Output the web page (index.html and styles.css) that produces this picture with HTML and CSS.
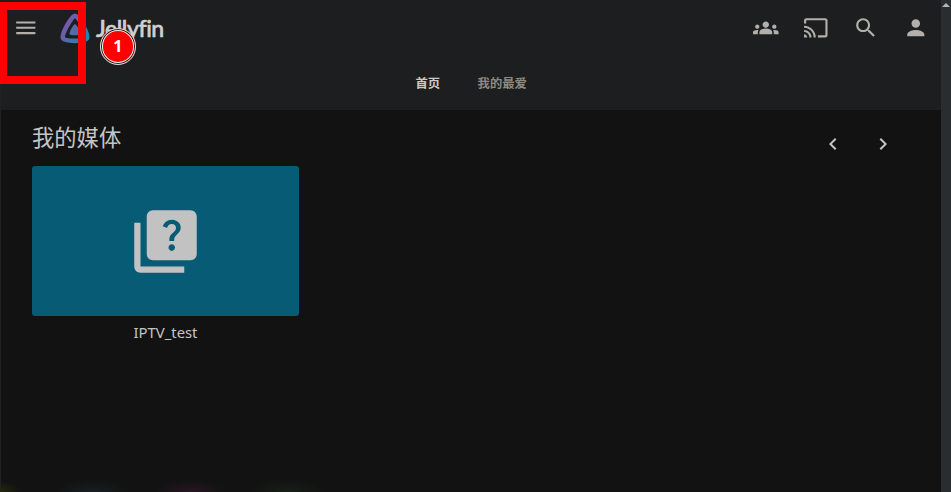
FILE: index.html
```html
<!DOCTYPE html>
<html lang="zh-CN">
<head>
<meta charset="utf-8">
<title>Jellyfin</title>
<link rel="stylesheet" href="styles.css">
</head>
<body>
<div class="app">
  <div class="page">
    <header class="header">
      <div class="topbar">
        <svg class="icon menu" viewBox="0 0 24 24"><path d="M3 18h18v-2H3v2zm0-5h18v-2H3v2zm0-7v2h18V6H3z"/></svg>
        <div class="brand">
          <svg class="mark" viewBox="0 0 32 32">
            <defs><linearGradient id="g" x1="5" y1="10" x2="29" y2="25" gradientUnits="userSpaceOnUse"><stop offset="0" stop-color="#8053a5"/><stop offset="1" stop-color="#168bb8"/></linearGradient></defs>
            <path d="M16 3.700C12.500 3.700 2.200 22.800 4 26.300c1.800 3.400 22.300 3.400 24 0C29.700 22.800 19.500 3.700 16 3.700Z" fill="none" stroke="url(#g)" stroke-width="4.600"/>
            <path d="M16 12.300c-1.600 0-6.100 8.300-5.400 9.900.8 1.500 10 1.500 10.800 0C22.200 20.600 17.600 12.300 16 12.300Z" fill="url(#g)"/>
          </svg>
          <span class="brand-name">Jellyfin</span>
        </div>
        <nav class="actions">
          <svg class="icon" viewBox="0 0 24 24"><path d="M12 12.750c1.630 0 3.070.390 4.240.9 1.080.480 1.760 1.560 1.760 2.730V18H6v-1.610c0-1.180.680-2.260 1.760-2.730 1.170-.520 2.610-.910 4.240-.910zM4 13c1.100 0 2-.9 2-2s-.9-2-2-2-2 .9-2 2 .9 2 2 2zm1.130 1.100C4.760 14.040 4.390 14 4 14c-.990 0-1.930.210-2.780.580C.480 14.900 0 15.620 0 16.430V18h4.500v-1.610c0-.830.230-1.610.630-2.290zM20 13c1.100 0 2-.9 2-2s-.9-2-2-2-2 .9-2 2 .9 2 2 2zm4 3.430c0-.810-.480-1.530-1.220-1.850C21.930 14.210 20.990 14 20 14c-.390 0-.760.040-1.130.100.4.680.630 1.460.630 2.290V18H24v-1.570zM12 6c1.660 0 3 1.340 3 3s-1.340 3-3 3-3-1.340-3-3 1.340-3 3-3z"/></svg>
          <svg class="icon" viewBox="0 0 24 24"><path d="M21 3H3c-1.100 0-2 .9-2 2v3h2V5h18v14h-7v2h7c1.100 0 2-.9 2-2V5c0-1.100-.9-2-2-2zM1 18v3h3c0-1.660-1.340-3-3-3zm0-4v2c2.760 0 5 2.240 5 5h2c0-3.870-3.130-7-7-7zm0-4v2c4.970 0 9 4.030 9 9h2c0-6.080-4.930-11-11-11z"/></svg>
          <svg class="icon" viewBox="0 0 24 24"><path d="M15.500 14h-.790l-.280-.270C15.410 12.590 16 11.110 16 9.500 16 5.910 13.090 3 9.500 3S3 5.910 3 9.500 5.910 16 9.500 16c1.610 0 3.090-.590 4.230-1.570l.270.280v.790l5 4.990L20.490 19l-4.990-5zm-6 0C7.010 14 5 11.990 5 9.500S7.010 5 9.500 5 14 7.010 14 9.500 11.990 14 9.500 14z"/></svg>
          <svg class="icon" viewBox="0 0 24 24"><path d="M12 12c2.210 0 4-1.790 4-4s-1.790-4-4-4-4 1.790-4 4 1.790 4 4 4zm0 2c-2.670 0-8 1.340-8 4v2h16v-2c0-2.660-5.330-4-8-4z"/></svg>
        </nav>
      </div>
      <nav class="tabs"><span class="tab tab-active">首页</span><span class="tab">我的最爱</span></nav>
    </header>
    <main class="content">
      <div class="section-head">
        <h2 class="title">我的媒体</h2>
        <div class="arrows">
          <svg class="arrow" viewBox="0 0 24 24"><path d="M15.410 7.410 14 6l-6 6 6 6 1.410-1.410L10.830 12z"/></svg>
          <svg class="arrow" viewBox="0 0 24 24"><path d="M10 6 8.590 7.410 13.170 12l-4.580 4.590L10 18l6-6z"/></svg>
        </div>
      </div>
      <div class="card">
        <div class="cover"><svg class="cover-icon" viewBox="0 0 24 24"><path d="M4 6H2v14c0 1.100.9 2 2 2h14v-2H4V6z"/><path d="M20 2H8c-1.100 0-2 .9-2 2v12c0 1.100.9 2 2 2h12c1.100 0 2-.9 2-2V4c0-1.100-.9-2-2-2zm-5.990 13c-.590 0-1.050-.470-1.050-1.050 0-.590.470-1.040 1.050-1.040.590 0 1.040.450 1.040 1.040-.010.580-.450 1.050-1.040 1.050zm2.500-6.170c-.630.930-1.230 1.210-1.560 1.810-.130.240-.180.4-.180 1.180h-1.520c0-.410-.060-1.080.260-1.650.410-.730 1.180-1.160 1.630-1.800.480-.680.210-1.940-1.140-1.940-.880 0-1.320.670-1.500 1.230l-1.370-.570C11.510 5.960 12.520 5 13.990 5c1.230 0 2.080.560 2.510 1.260.370.6.580 1.730.010 2.570z"/></svg></div>
        <div class="caption">IPTV_test</div>
      </div>
    </main>
  </div>
  <div class="scrollbar"><svg class="scroll-up" viewBox="0 0 8 4"><path d="M0 4 4 0l4 4z"/></svg></div>
  <div class="glow"></div>
  <div class="highlight"></div>
  <div class="badge">1</div>
</div>
</body>
</html>
```
FILE: styles.css
```css
* { box-sizing: border-box; }
body {
  margin: 0;
  background: #121212;
  color: #c5c5c5;
  font-family: "Noto Sans", "Noto Sans CJK SC", sans-serif;
}
.app {
  position: relative;
  display: flex;
  width: 951px;
  height: 492px;
  overflow: hidden;
}
.page { flex: 1; border-left: 1px solid #202123; }
.header { height: 110px; background: #1d1e20; }
.topbar { display: flex; align-items: center; height: 56px; padding: 0 12px; }
.icon { width: 25.600px; height: 25.600px; fill: #b3afab; flex: none; }
.brand { display: flex; align-items: center; margin: 0 0 0 20.400px; }
.mark { width: 32px; height: 32px; }
.brand-name {
  margin-left: 5px;
  color: #d0d0d0;
  font: 500 23px/32px Lato, sans-serif;
  letter-spacing: -.4px;
  -webkit-text-stroke: .6px #d0d0d0;
}
.actions { display: flex; gap: 24.400px; margin-left: auto; }
.tabs {
  display: flex;
  gap: 37.500px;
  height: 54px;
  padding-left: 414.500px;
  color: #8f8981;
  font: bold 12.300px/54px "Noto Sans CJK SC", sans-serif;
}
.tab-active { color: #cfcac3; }
.content { padding: 10px 31px; }
.section-head { display: flex; justify-content: space-between; height: 46px; }
.title {
  margin: 0;
  font: 400 22.300px/32px "Noto Sans CJK SC", sans-serif;
}
.arrows { display: flex; gap: 26px; margin: 12px 15px 0 0; }
.arrow { width: 24px; height: 24px; fill: #c5c5c5; }
.card { width: 267px; }
.cover {
  display: flex;
  align-items: center;
  justify-content: center;
  height: 150px;
  border-radius: 3px;
  background: #085b75;
}
.cover-icon { width: 75px; height: 75px; fill: #c3c2c2; }
.caption { margin-top: 5px; font-size: 14.850px; line-height: 22px; text-align: center; }
.scrollbar {
  display: flex;
  justify-content: center;
  width: 10px;
  padding-top: 3px;
  background: #2a2d30;
}
.scroll-up { width: 8px; height: 4px; fill: #b5b5b5; }
.glow {
  position: absolute;
  left: 0;
  bottom: 0;
  width: 340px;
  height: 12px;
  background:
    radial-gradient(ellipse 22px 11px at 0 100%, #24270e, transparent),
    radial-gradient(ellipse 36px 12px at 92px 100%, #172023, transparent),
    radial-gradient(ellipse 36px 12px at 190px 100%, #271721, transparent),
    radial-gradient(ellipse 36px 12px at 287px 100%, #182018, transparent);
}
.highlight {
  position: absolute;
  left: 0;
  top: 2px;
  width: 86px;
  height: 82px;
  border: 8px solid #f00;
  border-left-width: 7px;
}
.badge {
  position: absolute;
  left: 99.500px;
  top: 28px;
  width: 36.500px;
  height: 36.500px;
  border: 1px solid #ddd;
  border-radius: 50%;
  background: #f00;
  box-shadow: inset 0 0 0 1px #3b1010, inset 0 0 0 2px #eee;
  color: #fff;
  font: bold 16px/34px "Noto Sans", sans-serif;
  text-align: center;
}
```
